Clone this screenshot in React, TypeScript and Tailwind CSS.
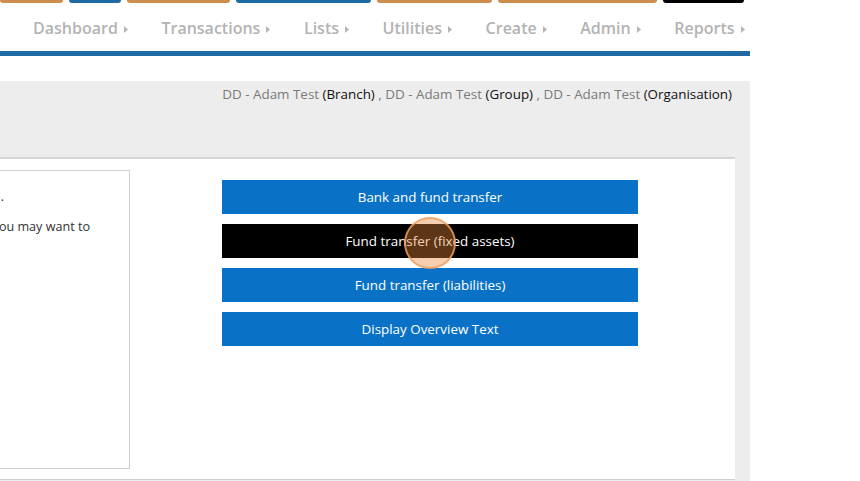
import React from "react";

const tabs = [
    {w: 63, c: "bg-[#cc8d4f]"},
    {w: 52, c: "bg-[#1f6aa5]"},
    {w: 104, c: "bg-[#cc8d4f]"},
    {w: 135, c: "bg-[#1f6aa5]"},
    {w: 115, c: "bg-[#cc8d4f]"},
    {w: 160, c: "bg-[#cc8d4f]"},
    {w: 81, c: "bg-black"},
];

const navItems = ["Dashboard", "Transactions", "Lists", "Utilities", "Create", "Admin", "Reports"];

const buttons = [
    {label: "Bank and fund transfer", active: false},
    {label: "Fund transfer (fixed assets)", active: true},
    {label: "Fund transfer (liabilities)", active: false},
    {label: "Display Overview Text", active: false},
];

function Caret() {
    return (
        <svg width="4" height="7" viewBox="0 0 4 7" className="ml-[6px] mt-[3px]">
            <path d="M0 0 L4 3.5 L0 7 Z" fill="#b5b5b5"/>
        </svg>
    );
}

export default function App() {
    return (
        <div className="w-[860px] h-[481px] overflow-hidden bg-white font-['Open_Sans',sans-serif]">
            {/* colored tab stubs */}
            <div className="flex h-[3px] w-[750px]">
                {tabs.map((t, i) => (
                    <div key={i} className={`${t.c} h-[3px] rounded-b-[3px] mr-[6px]`} style={{width: t.w}}/>
                ))}
            </div>

            <div className="w-[750px]">
                <nav className="flex items-center h-[48px] pl-[33px] pt-[2px]">
                    {navItems.map((item) => (
                        <div key={item} className="flex items-center mr-[33.6px] text-[16px] font-semibold text-[#b3b3b3]">
                            <span>{item}</span>
                            <Caret/>
                        </div>
                    ))}
                </nav>
                <div className="h-[5px] bg-[#1f6aa5]"/>

                <div className="h-[25px]"/>

                <div className="bg-[#eeedee] pr-[15px] h-[400px]">
                    <div className="h-[76px] pt-[3px] text-right text-[13.4px] text-[#7a7a7a] pr-[3px]">
                        DD - Adam Test <span className="text-[#111]">(Branch)</span> , DD - Adam Test <span
                        className="text-[#111]">(Group)</span> , DD - Adam Test <span
                        className="text-[#111]">(Organisation)</span>
                    </div>

                    <div className="bg-white border-t-2 border-[#d6d6da] border-b border-b-[#cfcfcf] h-[323px] flex">
                        <div className="mt-[11px] -ml-[20px] w-[150px] h-[299px] border border-[#cfcfcf] text-[13.4px] text-[#333]">
                            <div className="flex justify-end w-[23px] whitespace-nowrap mt-[15px]">
                                Select the type of transfer you need to record.
                            </div>
                            <div className="flex justify-end w-[109px] whitespace-nowrap mt-[12px] text-[12.6px]">
                                If the transfer involves a fixed asset you may want to
                            </div>
                        </div>

                        <div className="relative ml-[92px] mt-[21px] w-[416px] flex flex-col gap-[10px]">
                            {buttons.map((b) => (
                                <div key={b.label}
                                     className={`h-[34px] flex items-center justify-center text-[13.4px] text-white ${b.active ? "bg-black" : "bg-[#0a72c6]"}`}>
                                    {b.label}
                                </div>
                            ))}
                            <div className="absolute left-[182px] top-[37px] w-[52px] h-[52px] rounded-full border-2 border-[#f0a060]/80 bg-[#e8873a]/40"/>
                        </div>
                    </div>
                </div>
            </div>
        </div>
    );
}
